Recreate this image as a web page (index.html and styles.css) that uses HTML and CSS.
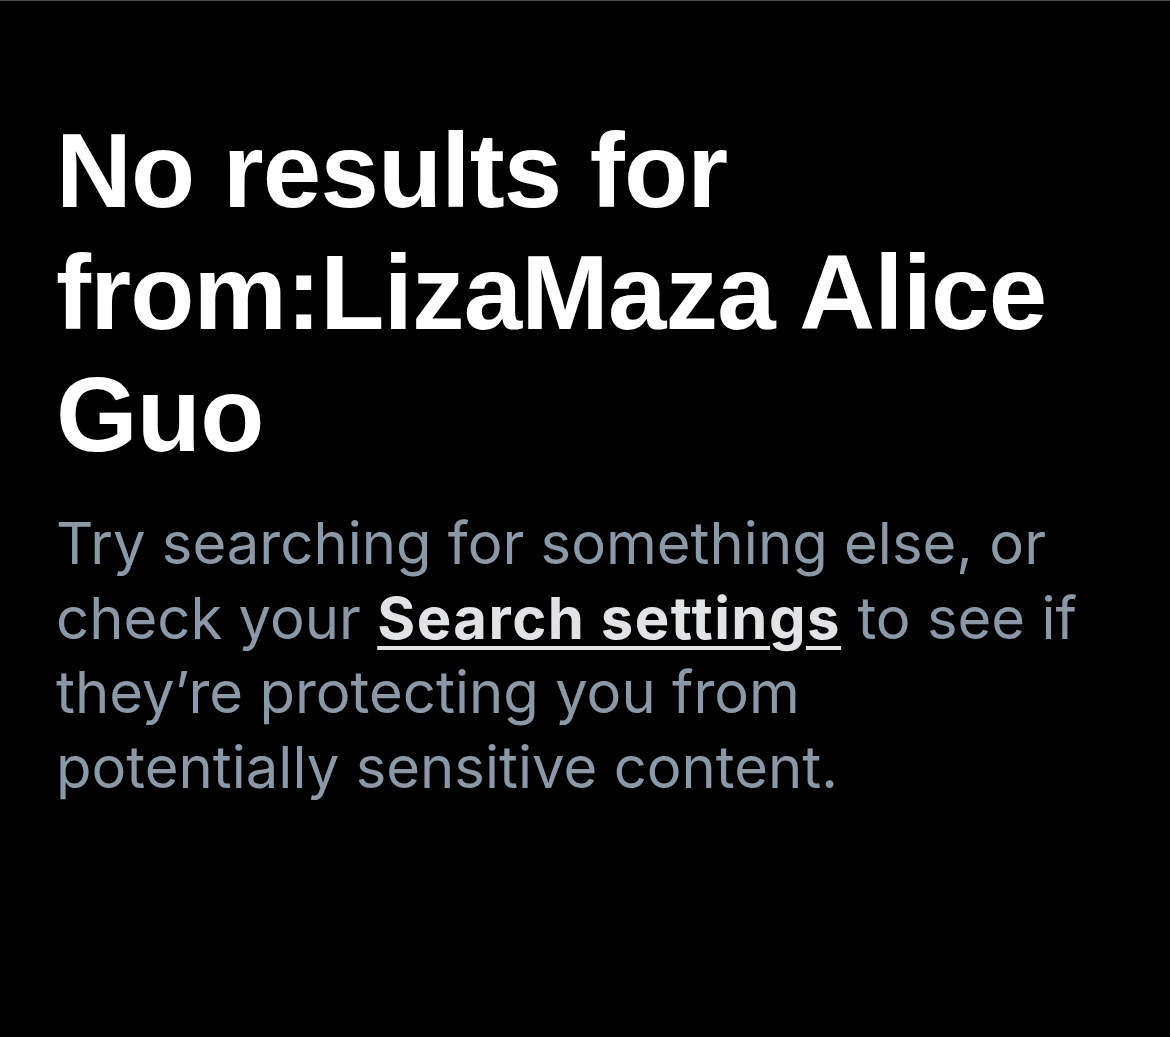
FILE: index.html
```html
<!DOCTYPE html>
<html lang="en">
<head>
<meta charset="utf-8">
<title>No results</title>
<link rel="stylesheet" href="styles.css">
</head>
<body>
<main class="page">
  <section class="empty">
    <h1 class="empty-title">No results for from:LizaMaza Alice Guo</h1>
    <p class="empty-text">Try searching for something else, or check your <a class="empty-link" href="#">Search settings</a> to see if they’re protecting you from potentially sensitive content.</p>
  </section>
</main>
</body>
</html>
```

FILE: styles.css
```css
html, body {
  margin: 0;
  padding: 0;
  background: #000;
}

.page {
  box-sizing: border-box;
  min-height: 1037px;
  border-top: 1px solid #4b4e52;
  background: #000;
  padding: 109px 57px 0 56px;
}

.empty {
  max-width: 1036px;
}

.empty-title {
  margin: 0;
  font-family: "Liberation Sans", Arial, sans-serif;
  font-weight: 700;
  font-size: 105px;
  line-height: 122px;
  letter-spacing: -0.8px;
  color: #ffffff;
}

.empty-text {
  margin: 30px 0 0;
  font-family: Inter, "Liberation Sans", Arial, sans-serif;
  font-weight: 400;
  font-size: 58px;
  line-height: 74.7px;
  letter-spacing: 0;
  color: #8b98a5;
}

.empty-link {
  color: #e1e3e5;
  font-weight: 700;
  letter-spacing: 1.5px;
  text-decoration: underline;
  text-decoration-thickness: 4px;
  text-underline-offset: 7px;
}
```
